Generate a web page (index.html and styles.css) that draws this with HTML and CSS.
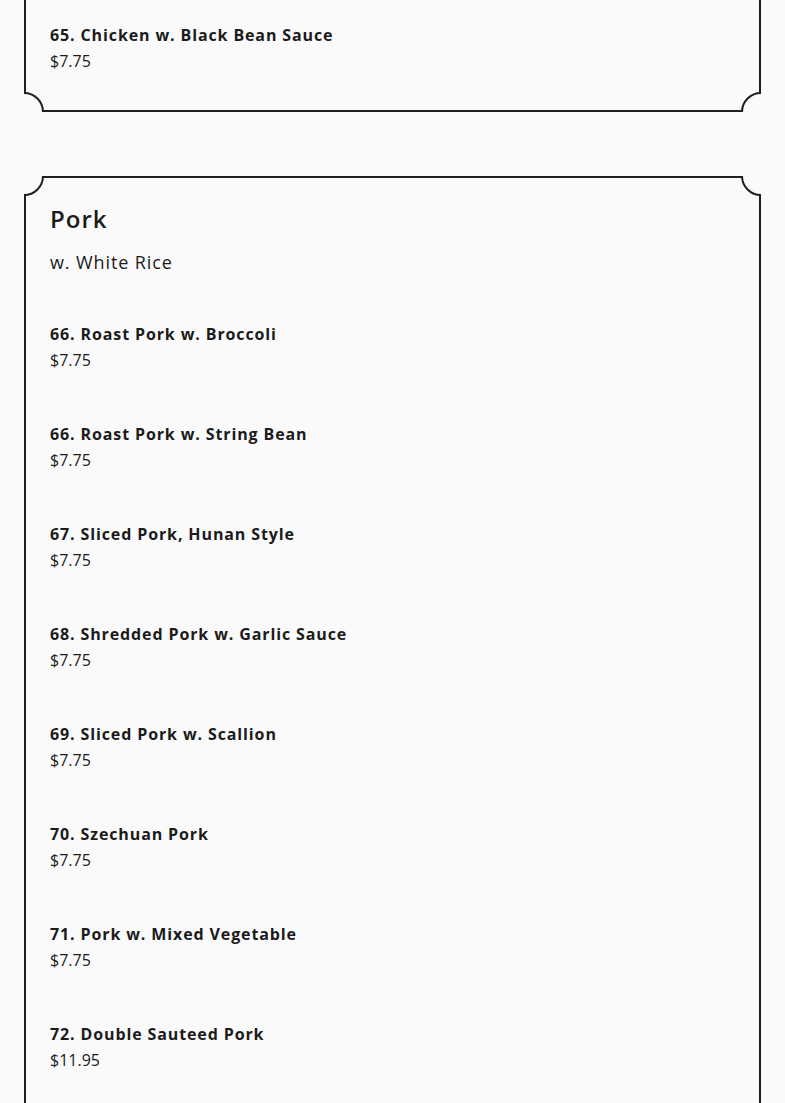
FILE: index.html
```html
<!DOCTYPE html>
<html lang="en">
<head>
<meta charset="utf-8">
<title>Menu</title>
<link rel="stylesheet" href="styles.css">
</head>
<body>
<main class="menu">
  <section class="card card--continued">
    <span class="corner corner--tl"></span><span class="corner corner--tr"></span>
    <span class="corner corner--bl"></span><span class="corner corner--br"></span>
    <ul class="items">
      <li class="item"><h3 class="item-name">65. Chicken w. Black Bean Sauce</h3><p class="item-price">$7.75</p></li>
    </ul>
  </section>

  <section class="card card--open">
    <span class="corner corner--tl"></span><span class="corner corner--tr"></span>
    <span class="corner corner--bl"></span><span class="corner corner--br"></span>
    <header class="card-head">
      <h2 class="card-title">Pork</h2>
      <p class="card-sub">w. White Rice</p>
    </header>
    <ul class="items">
      <li class="item"><h3 class="item-name">66. Roast Pork w. Broccoli</h3><p class="item-price">$7.75</p></li>
      <li class="item"><h3 class="item-name">66. Roast Pork w. String Bean</h3><p class="item-price">$7.75</p></li>
      <li class="item"><h3 class="item-name">67. Sliced Pork, Hunan Style</h3><p class="item-price">$7.75</p></li>
      <li class="item"><h3 class="item-name">68. Shredded Pork w. Garlic Sauce</h3><p class="item-price">$7.75</p></li>
      <li class="item"><h3 class="item-name">69. Sliced Pork w. Scallion</h3><p class="item-price">$7.75</p></li>
      <li class="item"><h3 class="item-name">70. Szechuan Pork</h3><p class="item-price">$7.75</p></li>
      <li class="item"><h3 class="item-name">71. Pork w. Mixed Vegetable</h3><p class="item-price">$7.75</p></li>
      <li class="item"><h3 class="item-name">72. Double Sauteed Pork</h3><p class="item-price">$11.95</p></li>
    </ul>
  </section>
</main>
</body>
</html>
```

FILE: styles.css
```css
* { box-sizing: border-box; }
html, body { margin: 0; padding: 0; }
body {
  background: #fafafa;
  color: #1b1b1b;
  font-family: "Open Sans", "DejaVu Sans", sans-serif;
}
.menu {
  display: flex;
  flex-direction: column;
  gap: 64px;
  padding: 0 24px 40px;
}
.card {
  position: relative;
  border: 2px solid #1f1f1f;
  padding: 24px 24px 12px;
  clip-path: inset(0);
}
.card--continued {
  margin-top: -40px;
  padding-top: 36px;
}
.card--open {
  padding-bottom: 60px;
}
.corner {
  position: absolute;
  width: 40px;
  height: 40px;
  border: 2px solid #1f1f1f;
  border-radius: 50%;
  background: #fafafa;
}
.corner--tl { top: -22px; left: -22px; }
.corner--tr { top: -22px; right: -22px; }
.corner--bl { bottom: -22px; left: -22px; }
.corner--br { bottom: -22px; right: -22px; }
.card-head { margin-bottom: 21px; }
.card-title {
  margin: 0 0 12px;
  font-size: 24px;
  line-height: 34px;
  font-weight: 600;
  letter-spacing: 1px;
}
.card-sub {
  margin: 0;
  font-size: 18px;
  line-height: 28px;
  font-weight: 400;
  letter-spacing: 0.9px;
}
.items { list-style: none; margin: 0; padding: 0; }
.item { padding: 24px 0; }
.item-name {
  margin: 0;
  font-size: 16px;
  line-height: 26px;
  font-weight: 700;
  letter-spacing: 0.88px;
}
.item-price {
  margin: 0;
  font-size: 16px;
  line-height: 26px;
  font-weight: 400;
}
```
